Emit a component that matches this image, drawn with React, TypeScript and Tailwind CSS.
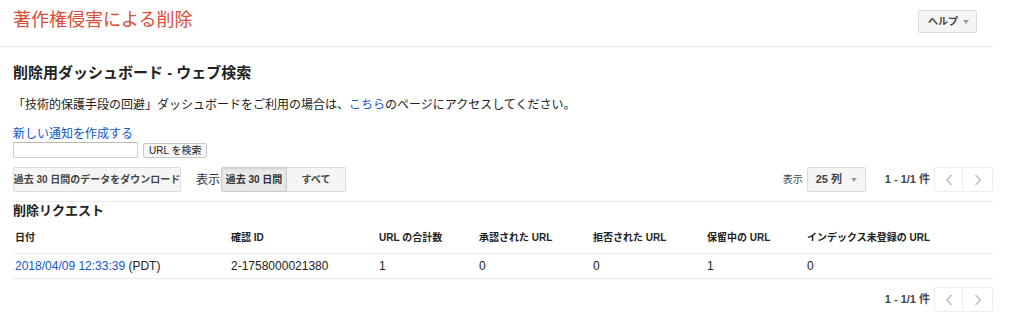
import React from "react";

const font = { fontFamily: '"Liberation Sans", Arial, "Noto Sans CJK JP", sans-serif' };

function Chevron({ dir }: { dir: "l" | "r" }) {
  return (
    <svg width="8" height="12" viewBox="0 0 8 12" fill="none">
      {dir === "l" ? (
        <path d="M6.5 1 L1.8 6 L6.5 11" stroke="#c4c4c4" strokeWidth="1.8" />
      ) : (
        <path d="M1.5 1 L6.2 6 L1.5 11" stroke="#c4c4c4" strokeWidth="1.8" />
      )}
    </svg>
  );
}

function Pager() {
  return (
    <div className="flex items-center">
      <span className="text-[11px] font-bold text-[#444] mr-[4px] whitespace-nowrap">1 - 1/1 件</span>
      <div className="flex h-[25px] border border-[#eeeeee] rounded-[2px]">
        <div className="w-[28px] flex items-center justify-center border-r border-[#eeeeee]">
          <Chevron dir="l" />
        </div>
        <div className="w-[29px] flex items-center justify-center">
          <Chevron dir="r" />
        </div>
      </div>
    </div>
  );
}

function Caret() {
  return <span className="inline-block w-0 h-0 border-l-[3px] border-r-[3px] border-t-[4px] border-l-transparent border-r-transparent border-t-[#999]" />;
}

export default function App() {
  const cols = ["w-[216px]", "w-[148px]", "w-[100px]", "w-[114px]", "w-[114px]", "w-[100px]", "flex-1"];
  const heads = ["日付", "確認 ID", "URL の合計数", "承認された URL", "拒否された URL", "保留中の URL", "インデックス未登録の URL"];
  return (
    <div className="w-[1024px] h-[326px] bg-white text-[#222] overflow-hidden" style={font}>
      <div className="w-[993px]">
        <div className="h-[47px] border-b border-[#ebebeb] flex items-start justify-between pl-[13px] pr-[16px]">
          <div className="text-[18px] text-[#dd4b39] leading-[22px] mt-[9px]">著作権侵害による削除</div>
          <div className="mt-[10px] h-[23px] w-[59px] flex items-center justify-between pl-[9px] pr-[7px] bg-[#f5f5f5] border border-[#dcdcdc] rounded-[2px]">
            <span className="text-[10px] font-bold text-[#444]">ヘルプ</span>
            <Caret />
          </div>
        </div>
        <div className="pl-[13px]">
          <div className="text-[15px] font-bold leading-[20px] mt-[16px] text-[#222]">削除用ダッシュボード - ウェブ検索</div>
          <div className="text-[12px] leading-[16px] mt-[14px] text-[#222]">
            「技術的保護手段の回避」ダッシュボードをご利用の場合は、<span className="text-[#1155cc]">こちら</span>のページにアクセスしてください。
          </div>
          <div className="text-[12px] leading-[16px] mt-[13px] text-[#1155cc]">新しい通知を作成する</div>
          <div className="flex items-center gap-[5px] mt-[0px]">
            <div className="w-[125px] h-[16px] border border-[#d0d0d0] border-t-[#b8b8b8] bg-white" />
            <div className="h-[15px] px-[5px] flex items-center border border-[#c8c8c8] rounded-[2px] bg-[#f8f8f8] text-[10px] text-[#222] whitespace-nowrap">URL を検索</div>
          </div>
          <div className="flex items-center justify-between mt-[9px]">
            <div className="flex items-center">
              <div className="h-[25px] w-[168px] flex items-center justify-center bg-[#f5f5f5] border border-[#dcdcdc] rounded-[2px] text-[10px] font-bold text-[#444] whitespace-nowrap">過去 30 日間のデータをダウンロード</div>
              <span className="ml-[15px] text-[12px] text-[#333] mr-[1px]">表示</span>
              <div className="flex h-[25px]">
                <div className="w-[66px] flex items-center justify-center bg-[#e8e8e8] border border-[#cccccc] rounded-l-[2px] shadow-[inset_0_1px_2px_rgba(0,0,0,0.1)] text-[10px] font-bold text-[#333] whitespace-nowrap">過去 30 日間</div>
                <div className="w-[59px] flex items-center justify-center bg-[#f5f5f5] border border-l-0 border-[#dcdcdc] rounded-r-[2px] text-[10px] font-bold text-[#444]">すべて</div>
              </div>
            </div>
            <div className="flex items-center">
              <span className="text-[10px] text-[#444] mr-[4px]">表示</span>
              <div className="h-[25px] w-[59px] flex items-center justify-between pl-[8px] pr-[8px] bg-[#f5f5f5] border border-[#dcdcdc] rounded-[2px] mr-[19px]">
                <span className="text-[11px] font-bold text-[#444] whitespace-nowrap">25 列</span>
                <Caret />
              </div>
              <Pager />
            </div>
          </div>
          <div className="border-b border-[#ebebeb] mt-[9px]" />
          <div className="text-[13px] font-bold leading-[16px] mt-[1px] text-[#222]">削除リクエスト</div>
          <div className="flex h-[35px] items-end pb-[8px] border-b border-[#ebebeb] pl-[2px]">
            {heads.map((h, i) => (
              <div key={i} className={`${cols[i]} text-[10px] font-bold text-[#222] leading-[14px] whitespace-nowrap`}>{h}</div>
            ))}
          </div>
          <div className="flex h-[25px] items-center border-b border-[#ebebeb] pl-[2px] text-[12px] text-[#222]">
            <div className={cols[0]}><span className="text-[#1155cc]">2018/04/09 12:33:39</span> (PDT)</div>
            <div className={cols[1]}>2-1758000021380</div>
            <div className={cols[2]}>1</div>
            <div className={cols[3]}>0</div>
            <div className={cols[4]}>0</div>
            <div className={cols[5]}>1</div>
            <div className={cols[6]}>0</div>
          </div>
          <div className="flex justify-end mt-[8px]">
            <Pager />
          </div>
        </div>
      </div>
    </div>
  );
}
